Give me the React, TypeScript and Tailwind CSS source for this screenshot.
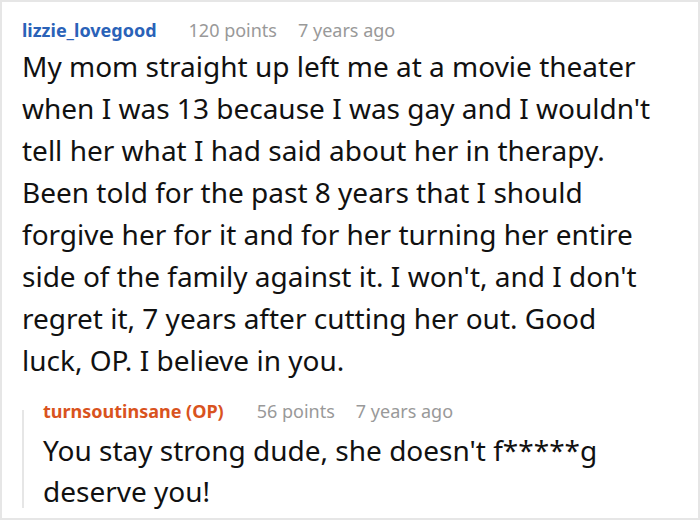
import React from 'react';

const font = { fontFamily: '"Noto Sans", "Open Sans", sans-serif' };

const Meta: React.FC<{ points: string; time: string; gap: string }> = ({ points, time, gap }) => (
  <>
    <span className={`${gap} text-[#999999] font-normal`}>{points}</span>
    <span className="ml-[21px] text-[#999999] font-normal">{time}</span>
  </>
);

export default function App() {
  return (
    <div
      className="w-[700px] h-[520px] bg-white border-2 border-[#e6e6e6] pl-[20px] pr-[36px] pt-[16px] overflow-hidden"
      style={font}
    >
      <div className="text-[18px] leading-[24px] font-bold text-[#2a62b8] whitespace-nowrap">
        lizzie_lovegood
        <Meta points="120 points" time="7 years ago" gap="ml-[32px]" />
      </div>
      <p className="mt-[3px] text-[28px] leading-[42px] text-[#111111]">
        My mom straight up left me at a movie theater when I was 13 because I was gay and I
        wouldn't tell her what I had said about her in therapy. Been told for the past 8 years
        that I should forgive her for it and for her turning her entire side of the family against
        it. I won't, and I don't regret it, 7 years after cutting her out. Good luck, OP. I
        believe in you.
      </p>

      <div className="mt-[18px] flex">
        <div className="w-[2px] bg-[#e6e6e6] mt-[11px] mb-[4px] shrink-0" />
        <div className="pl-[19px]">
          <div className="text-[18px] leading-[24px] font-bold text-[#d9531e] whitespace-nowrap">
            turnsoutinsane (OP)
            <Meta points="56 points" time="7 years ago" gap="ml-[33px]" />
          </div>
          <p className="mt-[7px] text-[28px] leading-[41px] text-[#111111]">
            You stay strong dude, she doesn't f*****g deserve you!
          </p>
        </div>
      </div>
    </div>
  );
}
